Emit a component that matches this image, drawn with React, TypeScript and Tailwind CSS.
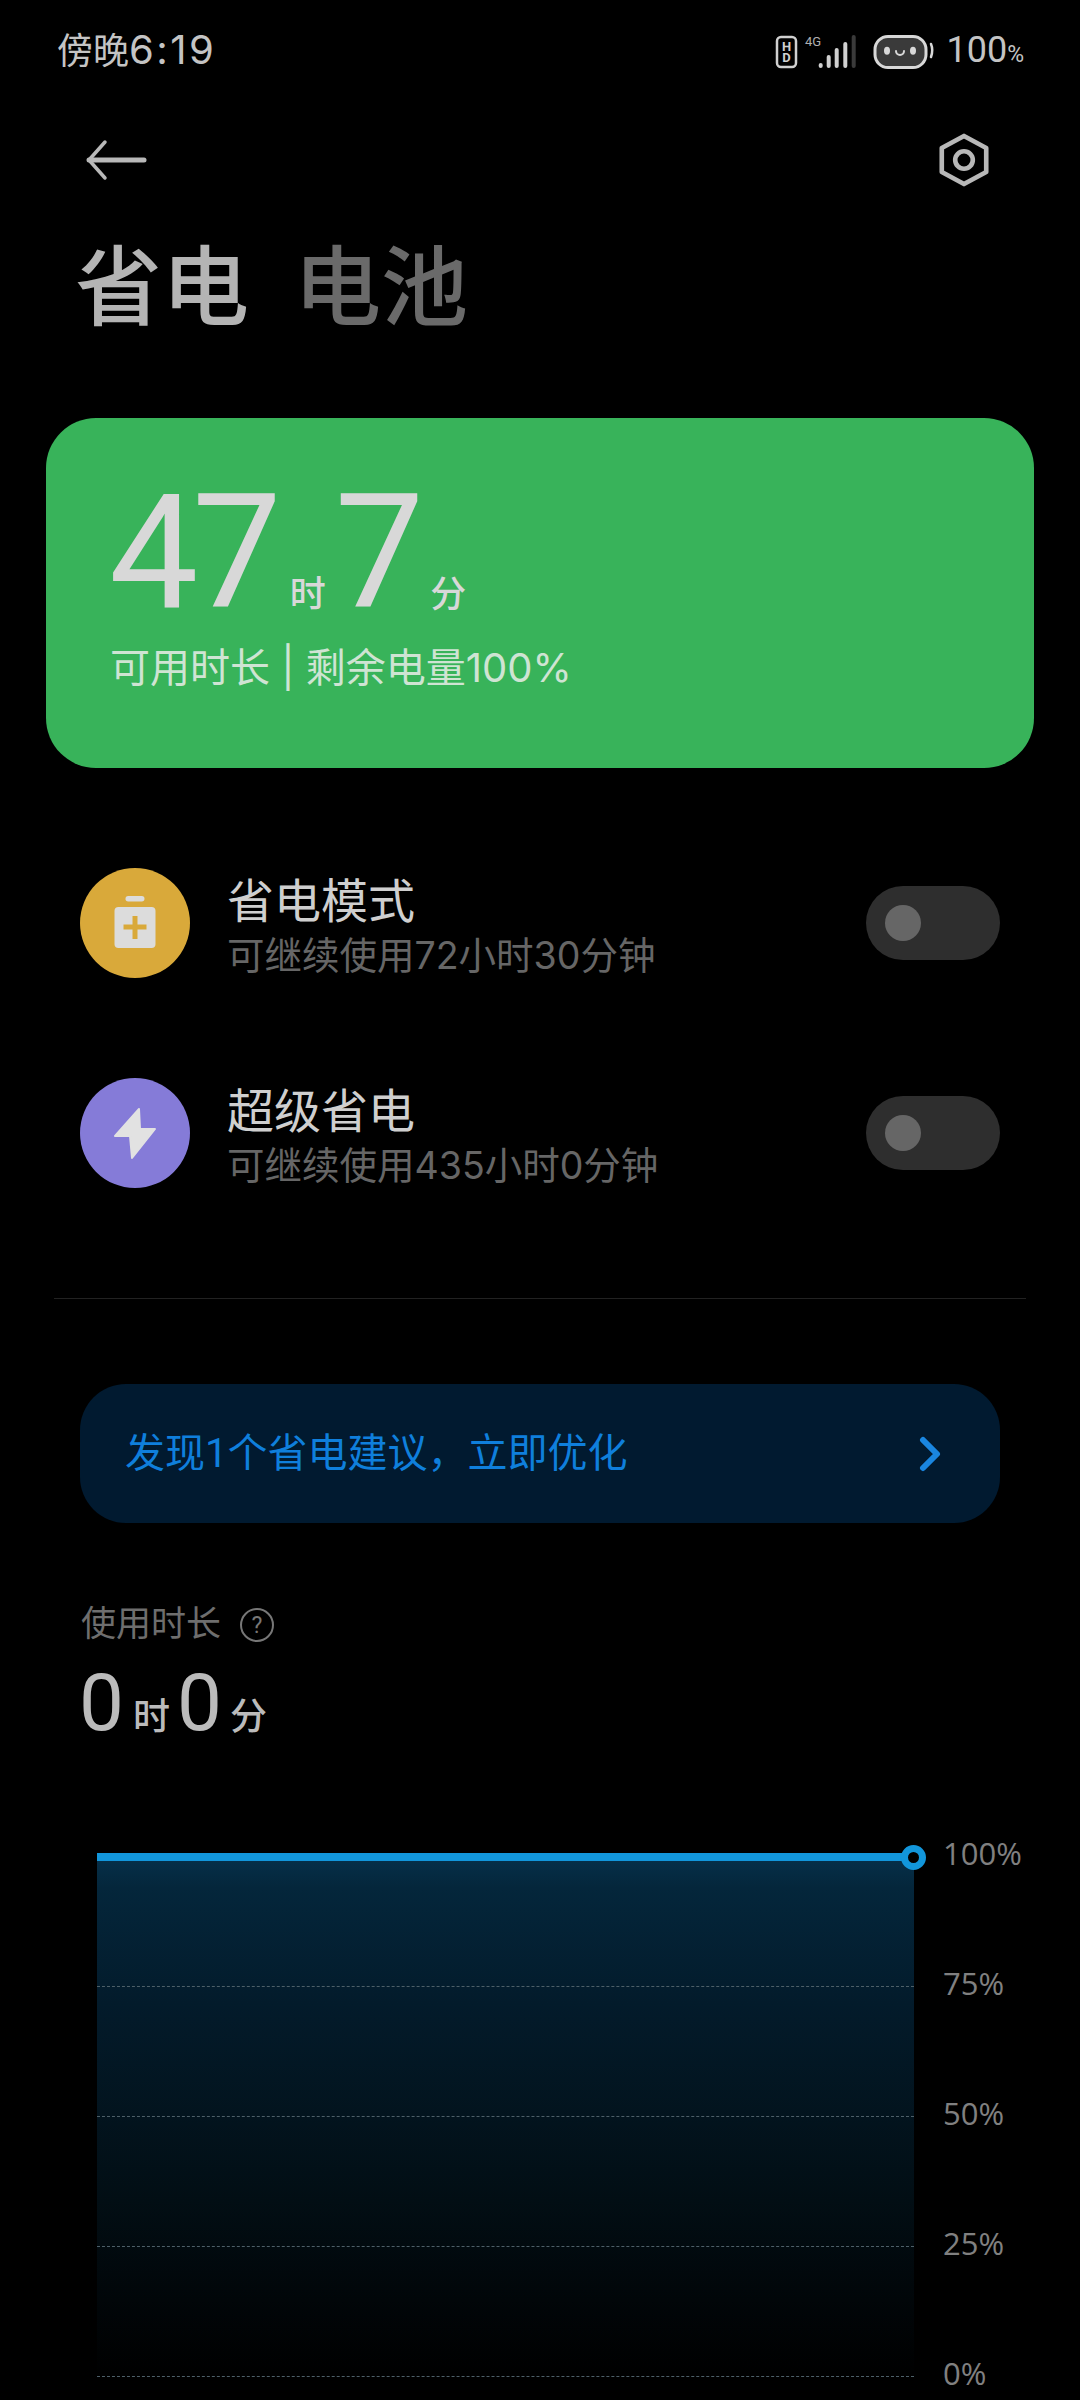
import React from 'react';

const font = "font-['Roboto','Noto_Sans_CJK_SC',sans-serif]";
const smallFont = "font-['Inter','Noto_Sans_CJK_SC',sans-serif]";

const BatteryIcon = () => (
  <svg width="110" height="110" viewBox="0 0 110 110">
    <rect x="45.5" y="28" width="19" height="5.5" rx="2.7" fill="#dcdcdc" />
    <rect x="34.5" y="39" width="41" height="41" rx="4" fill="#dcdcdc" />
    <path d="M43.5 59h23M55 48v23" stroke="#d9a93a" strokeWidth="5" />
  </svg>
);

const BoltIcon = () => (
  <svg width="110" height="110" viewBox="0 0 110 110">
    <path
      d="M59 31 L35 58 H50 L52 80 L75 51 H60 Z"
      fill="#e2e2e2"
      stroke="#e2e2e2"
      strokeWidth="2"
      strokeLinejoin="round"
    />
  </svg>
);

const Toggle = () => (
  <div className="flex h-[74px] w-[134px] shrink-0 items-center rounded-full bg-[#2e2e2e] pl-[19px]">
    <div className="h-[36px] w-[36px] rounded-full bg-[#666666]" />
  </div>
);

const ModeRow = ({
  color,
  icon,
  title,
  sub,
}: {
  color: string;
  icon: React.ReactNode;
  title: string;
  sub: string;
}) => (
  <div className="flex h-[110px] items-center pl-[80px] pr-[80px]">
    <div className={`h-[110px] w-[110px] shrink-0 rounded-full ${color}`}>{icon}</div>
    <div className="ml-[37px] flex-1 pt-[8px]">
      <div className="text-[47px] leading-[54px] text-[#cfcfcf]">{title}</div>
      <div className={`mt-[4px] text-[37.5px] leading-[46px] text-[#666666] ${smallFont}`}>{sub}</div>
    </div>
    <Toggle />
  </div>
);

const App: React.FC = () => {
  const labels = ['100%', '75%', '50%', '25%', '0%'];

  return (
    <div className={`h-[2400px] w-[1080px] overflow-hidden bg-black ${font}`}>
      {/* status bar */}
      <div className="flex h-[100px] items-center pl-[57px] pr-[56px] text-[#c4c4c4]">
        <div className={`text-[36px] leading-none ${smallFont}`}>
          傍晚<span className="text-[40px] tracking-[2.5px]">6:19</span>
        </div>
        <div className="ml-auto flex items-center">
          <svg width="84" height="40" viewBox="0 0 84 40">
            <rect x="3" y="7" width="19" height="30" rx="4" fill="none" stroke="#d0d0d0" strokeWidth="2.5" />
            <text x="12.5" y="21" textAnchor="middle" fontSize="13" fontWeight="700" fill="#d0d0d0">H</text>
            <text x="12.5" y="32" textAnchor="middle" fontSize="13" fontWeight="700" fill="#d0d0d0">D</text>
            <text x="31" y="16" fontSize="13" fill="#b0b0b0">4G</text>
            <rect x="44.7" y="33" width="4" height="5" rx="2" fill="#d0d0d0" />
            <rect x="52.7" y="25" width="4" height="13" rx="2" fill="#d0d0d0" />
            <rect x="60.7" y="18" width="4" height="20" rx="2" fill="#d0d0d0" />
            <rect x="69.3" y="12" width="4" height="26" rx="2" fill="#d0d0d0" />
            <rect x="77.7" y="5" width="4" height="33" rx="2" fill="#3a3a3a" />
          </svg>
          <svg width="62" height="40" viewBox="0 0 62 40" className="ml-[15px]">
            <rect x="2" y="6.5" width="51" height="31" rx="13" fill="#3a3a3a" stroke="#d8d8d8" strokeWidth="3" />
            <ellipse cx="14" cy="20.7" rx="3" ry="4" fill="#d8d8d8" />
            <ellipse cx="40" cy="20.7" rx="3" ry="4" fill="#d8d8d8" />
            <path d="M23 21a4 4 0 0 0 8 0" fill="none" stroke="#d8d8d8" strokeWidth="2" strokeLinecap="round" />
            <path d="M58 14q2.5 6 0 13" fill="none" stroke="#d8d8d8" strokeWidth="2.5" strokeLinecap="round" />
          </svg>
          <div className="ml-[11px] flex items-baseline leading-none">
            <span className="text-[36px]">100</span>
            <span className="text-[23px]">%</span>
          </div>
        </div>
      </div>

      {/* back + settings */}
      <div className="flex h-[120px] items-center justify-between pl-[84px] pr-[91px]">
        <svg width="64" height="44" viewBox="0 0 64 44" fill="none" stroke="#b8b8b8" strokeLinecap="round" strokeLinejoin="round">
          <path d="M5 22H60" strokeWidth="5" />
          <path d="M21 4 L5 22 L21 40" strokeWidth="3.5" />
        </svg>
        <svg width="50" height="54" viewBox="0 0 54 58" fill="none" stroke="#b8b8b8" strokeWidth="5" strokeLinejoin="round">
          <path d="M27 3 L51 16 V42 L27 55 L3 42 V16 Z" />
          <circle cx="27" cy="29" r="9.5" />
        </svg>
      </div>

      {/* title tabs */}
      <div className="mt-[14px] flex h-[110px] items-center pl-[75px] text-[87px] font-medium leading-none">
        <span className="text-[#b4b4b4]">省电</span>
        <span className="ml-[45px] text-[#6a6a6a]">电池</span>
      </div>

      {/* battery card */}
      <div className="mx-[46px] mt-[74px] h-[350px] rounded-[50px] bg-[#38b35a] pl-[63px] pt-[50px] text-[#d8d8d8]">
        <div className="flex h-[170px] items-baseline">
          <span className="text-[159px] leading-[170px] tracking-[-6px]">47</span>
          <span className="ml-[14px] text-[36px] font-medium">时</span>
          <span className="ml-[9px] text-[159px] leading-[170px]">7</span>
          <span className="ml-[6px] text-[36px] font-medium">分</span>
        </div>
        <div className={`mt-[5px] pl-[1px] text-[40px] leading-[50px] text-[#cfe4d3] ${smallFont}`}>可用时长 | 剩余电量100%</div>
      </div>

      {/* modes */}
      <div className="mt-[100px] flex flex-col gap-[100px]">
        <ModeRow color="bg-[#d9a93a]" icon={<BatteryIcon />} title="省电模式" sub="可继续使用72小时30分钟" />
        <ModeRow color="bg-[#857bd8]" icon={<BoltIcon />} title="超级省电" sub="可继续使用435小时0分钟" />
      </div>

      <div className="mx-[54px] mt-[110px] h-[1px] bg-[#222222]" />

      {/* suggestion banner */}
      <div className="mx-[80px] mt-[85px] flex h-[139px] items-center justify-between rounded-[46px] bg-[#011a30] pl-[45px] pr-[58px]">
        <span className="text-[40px] text-[#0f7fdc]">发现1个省电建议，立即优化</span>
        <svg width="24" height="36" viewBox="0 0 24 36" fill="none" stroke="#1a86e0" strokeWidth="6" strokeLinecap="round" strokeLinejoin="round">
          <path d="M5 4 L19 18 L5 32" />
        </svg>
      </div>

      {/* usage */}
      <div className="mt-[80px] flex items-center pl-[81px] text-[#6e6e6e]">
        <span className="text-[35px] leading-[44px]">使用时长</span>
        <svg width="36" height="36" viewBox="0 0 36 36" className="ml-[18px]">
          <circle cx="18" cy="18" r="16" fill="none" stroke="#777777" strokeWidth="2" />
          <text x="18" y="26" textAnchor="middle" fontSize="23" fill="#777777">?</text>
        </svg>
      </div>
      <div className="mt-[11px] flex items-baseline pl-[79px] text-[#bbbbbb]">
        <span className="text-[80px] leading-[90px]">0</span>
        <span className="ml-[9px] text-[37px] font-medium">时</span>
        <span className="ml-[7px] text-[80px] leading-[90px]">0</span>
        <span className="ml-[8px] text-[37px] font-medium">分</span>
      </div>

      {/* chart */}
      <div className="mt-[40px] flex pl-[97px]">
        <div className="relative mt-[69px] h-[521px] w-[817px] bg-[linear-gradient(180deg,#06304a_0%,#04263b_6%,#031b2b_28%,#020e14_66%,#010609_85%,#000000_100%)]">
          <div className="absolute left-0 right-0 top-[-4px] h-[8px] bg-[#1296db]" />
          <div className="absolute right-[-12px] top-[-12px] h-[25px] w-[25px] rounded-full border-[7px] border-[#1296db] bg-black" />
          {[0, 1, 2, 3].map((i) => (
            <div key={i} className="h-[130px] border-b border-dashed border-[#4d5f68]" />
          ))}
        </div>
        <div className="ml-[29px] flex flex-col">
          {labels.map((l) => (
            <div key={l} className="flex h-[130px] items-center font-['Open_Sans',sans-serif] text-[31px] text-[#808080]">
              {l}
            </div>
          ))}
        </div>
      </div>
    </div>
  );
};

export default App;
